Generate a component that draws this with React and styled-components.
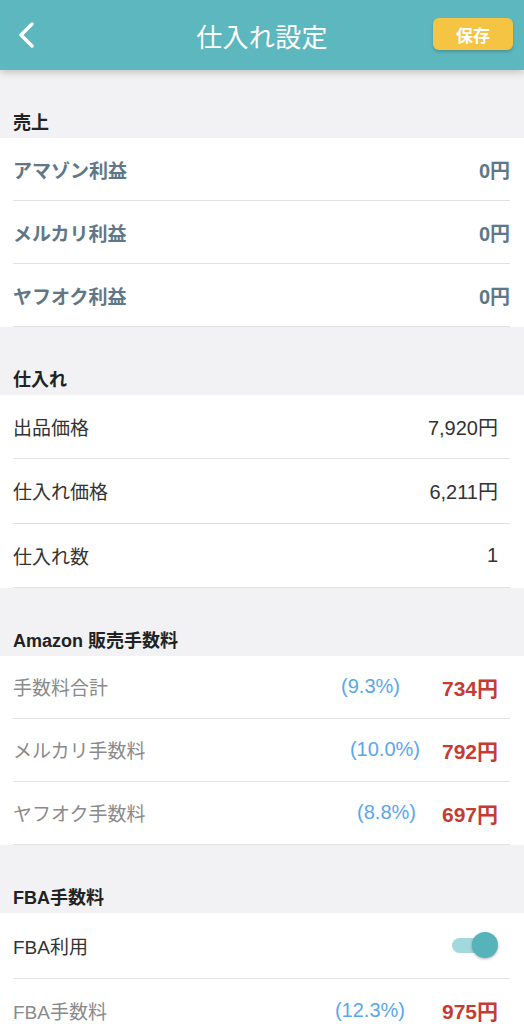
import styled, { createGlobalStyle } from "styled-components";

const GlobalStyle = createGlobalStyle`
    body {
        margin: 0;
        background: #f2f2f5;
        font-family: "Liberation Sans", "Noto Sans CJK JP", sans-serif;
        overflow: hidden;
    }
`;

const Page = styled.div`
    width: 524px;
    min-height: 1024px;
    background: #f2f2f5;
`;

const Header = styled.header`
    position: relative;
    z-index: 2;
    height: 70px;
    background: #5db7bf;
    box-shadow: 0 2px 8px rgba(0, 0, 0, 0.22);
    display: grid;
    grid-template-columns: 92px 1fr 92px;
    align-items: center;
    padding: 0 11px 0 0;
    box-sizing: border-box;
`;

const BackButton = styled.button`
    border: none;
    background: none;
    padding: 0 0 0 16px;
    height: 40px;
    display: flex;
    align-items: center;
    cursor: pointer;
`;

const Title = styled.h1`
    margin: 0 0 0 11px;
    text-align: center;
    color: #ffffff;
    font-size: 26px;
    font-weight: 400;
    letter-spacing: 0.3px;
`;

const SaveButton = styled.button`
    justify-self: end;
    width: 80px;
    height: 32px;
    border: none;
    border-radius: 6px;
    background: #f5c443;
    color: #ffffff;
    font-family: inherit;
    font-size: 17px;
    font-weight: 700;
    box-shadow: 0 2px 3px rgba(0, 0, 0, 0.18);
    margin-top: -2px;
`;

const SectionTitle = styled.div`
    height: 68px;
    box-sizing: border-box;
    display: flex;
    align-items: flex-end;
    padding: 0 13px 3px;
    font-size: 18px;
    line-height: 24px;
    font-weight: 700;
    color: #222222;
`;

const Card = styled.div`
    background: #ffffff;
`;

const Row = styled.div`
    height: ${props => props.height || 63}px;
    margin: 0 14px 0 13px;
    border-bottom: 1px solid #e2e2e4;
    box-sizing: border-box;
    display: flex;
    align-items: center;
    font-size: 19px;
`;

const Label = styled.span`
    flex: 1;
    color: ${props => props.tone === "slate" ? "#607787" : props.tone === "muted" ? "#8a8a8a" : "#333333"};
    font-weight: ${props => props.tone === "slate" ? 700 : 400};
`;

const Value = styled.span`
    color: ${props => props.tone === "slate" ? "#607787" : "#333333"};
    font-weight: ${props => props.tone === "slate" ? 700 : 400};
    font-size: 20px;
    margin-right: ${props => props.tone === "slate" ? "0" : "12px"};
`;

const Percent = styled.span`
    color: #5aa7ee;
    font-size: 20px;
`;

const Fee = styled.span`
    color: #c63b33;
    font-weight: 700;
    font-size: 21px;
    margin-right: 12px;
`;

const Toggle = styled.div`
    position: relative;
    width: 46px;
    height: 26px;
    margin-right: 12px;
    display: flex;
    align-items: center;

    &::before {
        content: "";
        width: 38px;
        height: 15px;
        border-radius: 8px;
        background: #a3d8dc;
    }

    &::after {
        content: "";
        position: absolute;
        right: 0;
        top: 0;
        width: 26px;
        height: 26px;
        border-radius: 50%;
        background: #55b3b9;
        box-shadow: 0 1px 3px rgba(0, 0, 0, 0.3);
    }
`;

const sales = [
    { label: "アマゾン利益", value: "0円" },
    { label: "メルカリ利益", value: "0円" },
    { label: "ヤフオク利益", value: "0円" }
];

const purchase = [
    { label: "出品価格", value: "7,920円" },
    { label: "仕入れ価格", value: "6,211円" },
    { label: "仕入れ数", value: "1" }
];

const fees = [
    { label: "手数料合計", percent: "(9.3%)", fee: "734円", gap: 42 },
    { label: "メルカリ手数料", percent: "(10.0%)", fee: "792円", gap: 22 },
    { label: "ヤフオク手数料", percent: "(8.8%)", fee: "697円", gap: 26 }
];

const BackIcon = () => (
    <svg width="22" height="26" viewBox="0 0 22 26">
        <path d="M16 2 L5 13 L16 24" fill="none" stroke="#ffffff" strokeWidth="3.4" strokeLinecap="round" strokeLinejoin="round" />
    </svg>
);

const App = () => {
    return (
        <Page>
            <GlobalStyle />
            <Header>
                <BackButton aria-label="back"><BackIcon /></BackButton>
                <Title>仕入れ設定</Title>
                <SaveButton>保存</SaveButton>
            </Header>

            <SectionTitle>売上</SectionTitle>
            <Card>
                {sales.map(item => (
                    <Row key={item.label}>
                        <Label tone="slate">{item.label}</Label>
                        <Value tone="slate">{item.value}</Value>
                    </Row>
                ))}
            </Card>

            <SectionTitle>仕入れ</SectionTitle>
            <Card>
                {purchase.map(item => (
                    <Row key={item.label} height={64.3}>
                        <Label>{item.label}</Label>
                        <Value>{item.value}</Value>
                    </Row>
                ))}
            </Card>

            <SectionTitle>Amazon 販売手数料</SectionTitle>
            <Card>
                {fees.map(item => (
                    <Row key={item.label}>
                        <Label tone="muted">{item.label}</Label>
                        <Percent style={{ marginRight: item.gap }}>{item.percent}</Percent>
                        <Fee>{item.fee}</Fee>
                    </Row>
                ))}
            </Card>

            <SectionTitle>FBA手数料</SectionTitle>
            <Card>
                <Row height={66}>
                    <Label>FBA利用</Label>
                    <Toggle />
                </Row>
                <Row height={64}>
                    <Label tone="muted">FBA手数料</Label>
                    <Percent style={{ marginRight: 37 }}>(12.3%)</Percent>
                    <Fee>975円</Fee>
                </Row>
            </Card>
        </Page>
    );
};

export default App;
